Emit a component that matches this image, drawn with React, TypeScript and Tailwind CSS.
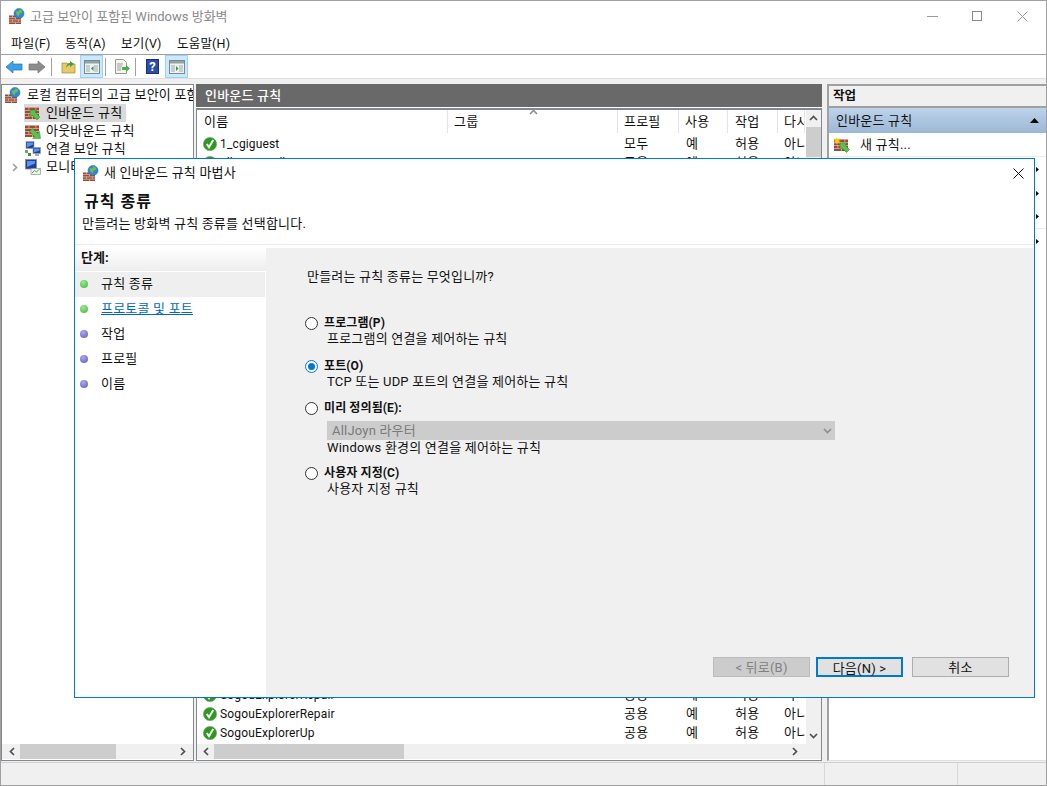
const ko = 'text-[13px] tracking-[0.2px]';

function Bricks({ x = 0, y = 0, w = 12, h = 10 }: { x?: number; y?: number; w?: number; h?: number }) {
  const rowH = h / 4;
  return (
    <g>
      <rect x={x} y={y} width={w} height={h} fill="#9c4a38" />
      {[0, 1, 2, 3].map((r) => (
        <rect key={r} x={x} y={y + r * rowH} width={w} height={0.8} fill="#d8b8a4" />
      ))}
      {[0, 1, 2, 3].map((r) => (
        <g key={r}>
          <rect x={x + (r % 2 ? w / 2 : w / 4)} y={y + r * rowH} width={0.8} height={rowH} fill="#d8b8a4" />
          {r % 2 === 0 && <rect x={x + (3 * w) / 4} y={y + r * rowH} width={0.8} height={rowH} fill="#d8b8a4" />}
        </g>
      ))}
    </g>
  );
}

function FirewallIcon() {
  return (
    <svg width="16" height="16" viewBox="0 0 16 16" className="shrink-0">
      <Bricks x={0} y={7} w={12} h={9} />
      <circle cx="10" cy="5.500" r="5" fill="#2f86d8" stroke="#1f5fa8" strokeWidth=".5" />
      <path d="M6.500 3c2 1 3 .5 4-1.800l3 1.500-1 2.300-2 .5-.8 3-2.200-2z" fill="#6cbf4a" />
    </svg>
  );
}

function RuleIcon({ dir }: { dir: 'in' | 'out' | 'new' }) {
  return (
    <svg width="16" height="16" viewBox="0 0 16 16" className="shrink-0">
      <Bricks x={0} y={2} w={14} h={12} />
      {dir === 'in' && <path d="M5 5h7l-2 2 5 5-3 3-5-5-2 2z" fill="#5cc04a" stroke="#2c8a34" strokeWidth=".5" />}
      {dir === 'out' && <path d="M15.500 15.500h-8l2-2-5-5 3-3 5 5 2-2z" fill="#5cc04a" stroke="#2c8a34" strokeWidth=".5" />}
      {dir === 'new' && <path d="M6 6h7l-2 2 4.500 4.500-3 3L8 11l-2 2z" fill="#5cc04a" stroke="#2c8a34" strokeWidth=".5" />}
      {dir === 'new' && <path d="M3 0l.8 2 2-.8-1 2 2 .8-2 .8 1 2-2-.8L3 8l-.8-2-2 .8 1-2-2-.8 2-.8-1-2 2 .8z" fill="#f5c518" />}
    </svg>
  );
}

function MonitorIcon({ variant }: { variant: 'sec' | 'mon' }) {
  if (variant === 'sec') {
    return (
      <svg width="16" height="16" viewBox="0 0 16 16" className="shrink-0">
        <rect x="1" y="0.500" width="8" height="7" fill="#1d3f9e" stroke="#99a" strokeWidth=".6" />
        <path d="M2 1.500h6v2l-6 3z" fill="#5f93e6" />
        <rect x="8" y="6.500" width="7.500" height="6" fill="#1d3f9e" stroke="#99a" strokeWidth=".6" />
        <path d="M9 7.500h5.500v2l-5.500 2z" fill="#5f93e6" />
        <rect x="10" y="13" width="4" height="2" fill="#aab" />
        <rect x="0" y="9" width="3" height="3" fill="#5cb54a" />
        <rect x="3" y="12" width="3" height="3" fill="#3f8f3f" />
      </svg>
    );
  }
  return (
    <svg width="16" height="16" viewBox="0 0 16 16" className="shrink-0">
      <rect x="0.500" y="0.500" width="11" height="9.500" fill="#1d3f9e" stroke="#889" strokeWidth=".8" />
      <path d="M2 2h8v2.500L2 8z" fill="#5f93e6" />
      <rect x="6" y="9.500" width="9.500" height="6" fill="#eef4ee" stroke="#8a9a8a" strokeWidth=".7" />
      <path d="M7 14l2.500-2.500 2 1.500 3-3" fill="none" stroke="#4cae4c" strokeWidth="1" />
    </svg>
  );
}

function CheckIcon() {
  return (
    <svg width="14" height="14" viewBox="0 0 14 14" className="shrink-0">
      <circle cx="7" cy="7" r="6.600" fill="#2c9a1c" stroke="#7f9a7f" strokeWidth=".7" />
      <path d="M3.800 7l2.200 3.200L10.200 3" fill="none" stroke="#fff" strokeWidth="2" />
    </svg>
  );
}

function Chevron({ dir, color = '#505050' }: { dir: 'l' | 'r' | 'u' | 'd'; color?: string }) {
  const d = { l: 'M6 1L2.500 4.500 6 8', r: 'M3 1l3.500 3.500L3 8', u: 'M1 6l3.500-3.500L8 6', d: 'M1 3l3.500 3.500L8 3' }[dir];
  return (
    <svg width="9" height="9" viewBox="0 0 9 9" className="shrink-0">
      <path d={d} fill="none" stroke={color} strokeWidth="1.700" />
    </svg>
  );
}

function ToolBtn({ active, children }: { active?: boolean; children: React.ReactNode }) {
  return (
    <div className={`w-[23px] h-[23px] flex items-center justify-center border ${active ? 'bg-[#cce8ff] border-[#99d1ff]' : 'border-transparent'}`}>
      {children}
    </div>
  );
}

function PaneIcon({ right }: { right?: boolean }) {
  return (
    <svg width="16" height="14" viewBox="0 0 16 14">
      <rect x=".5" y=".5" width="15" height="13" fill="#eef2f2" stroke="#7a8a8a" />
      <rect x="1" y="1" width="14" height="2.500" fill="#8fa4a4" />
      <rect x="2" y="5" width="4" height="7" fill="#c4d0d0" />
      <rect x="10" y="5" width="4" height="7" fill="#c4d0d0" />
      <path d={right ? 'M7 6v5l2.500-2.500z' : 'M9.500 6v5L7 8.500z'} fill="#2f9a3f" />
    </svg>
  );
}

function Radio({ checked }: { checked?: boolean }) {
  return (
    <span className={`w-[13px] h-[13px] rounded-full border bg-white flex items-center justify-center shrink-0 ${checked ? 'border-[#0078d7]' : 'border-[#333]'}`}>
      {checked && <span className="w-[7px] h-[7px] rounded-full bg-[#0078d7]" />}
    </span>
  );
}

function Bullet({ on }: { on: boolean }) {
  return (
    <span className={`w-[8px] h-[8px] rounded-full shrink-0 ${on ? 'bg-[radial-gradient(circle_at_40%_30%,#9be88f,#3fb83a)]' : 'bg-[radial-gradient(circle_at_40%_30%,#a9a9ee,#5a5ac0)]'}`} />
  );
}

function Option({ label, desc, checked, mt, children }: { label: string; desc: string; checked?: boolean; mt: string; children?: React.ReactNode }) {
  return (
    <div className={mt}>
      <div className="flex items-center h-[15px]">
        <Radio checked={checked} />
        <span className="ml-[6px] text-[12px] font-bold tracking-[0.1px] leading-[15px]">{label}</span>
      </div>
      {children}
      <div className={`ml-[22px] h-[16px] leading-[16px] ${ko}`}>{desc}</div>
    </div>
  );
}

const steps = [
  { t: '규칙 종류', on: true, sel: true },
  { t: '프로토콜 및 포트', on: true, link: true },
  { t: '작업', on: false },
  { t: '프로필', on: false },
  { t: '이름', on: false },
];

const rowNames = [
  '1_cgiguest', 'allinone_gdbserver', 'SogouExplorer', 'SogouExplorer', 'SogouExplorer', 'SogouExplorer', 'SogouExplorer', 'SogouExplorer',
  'SogouExplorer', 'SogouExplorer', 'SogouExplorer', 'SogouExplorer', 'SogouExplorer', 'SogouExplorer', 'SogouExplorer', 'SogouExplorer',
  'SogouExplorer', 'SogouExplorer', 'SogouExplorer', 'SogouExplorer', 'SogouExplorer', 'SogouExplorer', 'SogouExplorer', 'SogouExplorer',
  'SogouExplorer', 'SogouExplorer', 'SogouExplorer', 'SogouExplorer', 'SogouExplorer', 'SogouExplorerRepair', 'SogouExplorerRepair', 'SogouExplorerUp',
];

const cols = [
  { t: '이름', w: 'w-[251px]', p: 'pl-[7px]' },
  { t: '그룹', w: 'w-[170px]', p: 'pl-[6px]' },
  { t: '프로필', w: 'w-[61px]', p: 'pl-[6px]' },
  { t: '사용', w: 'w-[49px]', p: 'pl-[6px]' },
  { t: '작업', w: 'w-[50px]', p: 'pl-[7px]' },
  { t: '다시', w: 'w-[27px]', p: 'pl-[6px]' },
];

export default function App() {
  return (
    <div className="relative w-[1047px] h-[786px] overflow-hidden bg-[#f0f0f0] text-[#111] border border-[#a0a0a0] font-['Roboto','Noto_Sans_CJK_KR',sans-serif] text-[12px]">
      {/* title bar */}
      <div className="h-[30px] bg-white flex items-center pl-[8px]">
        <FirewallIcon />
        <span className="ml-[5px] pt-[1px] text-[#8a8a8a] text-[13px]">고급 보안이 포함된 Windows 방화벽</span>
        <div className="ml-auto flex items-center pr-[18px]">
          <div className="w-[11px] h-px bg-[#999]" />
          <div className="ml-[34px] w-[10px] h-[10px] border border-[#888]" />
          <svg width="11" height="11" viewBox="0 0 11 11" className="ml-[35px]"><path d="M.5.5l10 10M10.500.5l-10 10" stroke="#999" /></svg>
        </div>
      </div>
      {/* menu */}
      <div className="h-[24px] bg-white border-b border-[#a0a0a0] flex items-center pl-[10px] pt-[3px] text-[12.5px] tracking-[0.2px]">
        <span className="w-[54px]">파일(F)</span>
        <span className="w-[56px]">동작(A)</span>
        <span className="w-[56px]">보기(V)</span>
        <span>도움말(H)</span>
      </div>
      {/* toolbar */}
      <div className="h-[24px] bg-white flex items-center pl-[3px] border-b border-[#e0e0e0]">
        <svg width="18" height="14" viewBox="0 0 18 14" className="ml-px"><path d="M8 1v3h9v6H8v3L1 7z" fill="#3ba0e8" stroke="#2a6ea8" strokeWidth=".7" /></svg>
        <svg width="18" height="14" viewBox="0 0 18 14" className="ml-[5px]"><path d="M10 1v3H1v6h9v3l7-6z" fill="#8c8c8c" stroke="#707070" strokeWidth=".7" /></svg>
        <div className="w-px h-[18px] bg-[#a0a0a0] ml-[5px]" />
        <div className="ml-[5px]"><ToolBtn>
          <svg width="16" height="15" viewBox="0 0 16 15"><path d="M1 4h5l1 1h7v9H1z" fill="#e8c868" stroke="#a88830" strokeWidth=".7" /><path d="M5 9c0-3 2-5 4-5V2l4 3-4 3V6c-1.500 0-3 1-4 3z" fill="#3f9f3f" /></svg>
        </ToolBtn></div>
        <ToolBtn active><PaneIcon /></ToolBtn>
        <div className="w-px h-[18px] bg-[#a0a0a0] ml-[2px]" />
        <div className="ml-[4px]"><ToolBtn>
          <svg width="16" height="16" viewBox="0 0 16 16"><path d="M1.500.5h8l3 3v11h-11z" fill="#f6f6ee" stroke="#999" /><path d="M3 5h6M3 7h5M3 9h4M3 11h4" stroke="#999" /><path d="M8 8h4V6l4 3.500-4 3.500v-2H8z" fill="#4caf50" /></svg>
        </ToolBtn></div>
        <div className="w-px h-[18px] bg-[#a0a0a0] ml-[2px]" />
        <div className="ml-[5px]"><ToolBtn>
          <div className="w-[13px] h-[15px] bg-[#2b4fa8] border border-[#1a2f70] text-white font-bold text-[13px] leading-[13px] text-center">?</div>
        </ToolBtn></div>
        <div className="ml-px"><ToolBtn active><PaneIcon right /></ToolBtn></div>
      </div>
      {/* panes */}
      <div className="flex h-[682px] pt-[5px]">
        <div className="w-[193px] h-full border border-[#828790] bg-white relative flex flex-col shrink-0 overflow-hidden">
          <div className="flex-1 pl-[3px] pt-[1px]">
            <div className="flex items-center h-[18px]">
              <FirewallIcon />
              <span className={`ml-[6px] whitespace-nowrap ${ko}`}>로컬 컴퓨터의 고급 보안이 포함된 Windows 방화벽</span>
            </div>
            <div className="flex items-center h-[18px] ml-[19px]">
              <div className="flex items-center bg-[#d9d9d9] pl-px pr-[4px] h-[18px]">
                <RuleIcon dir="in" />
                <span className={`ml-[5px] whitespace-nowrap ${ko}`}>인바운드 규칙</span>
              </div>
            </div>
            <div className="flex items-center h-[18px] ml-[20px]">
              <RuleIcon dir="out" />
              <span className={`ml-[5px] whitespace-nowrap ${ko}`}>아웃바운드 규칙</span>
            </div>
            <div className="flex items-center h-[18px] ml-[20px]">
              <MonitorIcon variant="sec" />
              <span className={`ml-[5px] whitespace-nowrap ${ko}`}>연결 보안 규칙</span>
            </div>
            <div className="flex items-center h-[18px] ml-[5px]">
              <Chevron dir="r" color="#a0a0a0" />
              <span className="ml-[6px]"><MonitorIcon variant="mon" /></span>
              <span className={`ml-[5px] whitespace-nowrap ${ko}`}>모니터링</span>
            </div>
          </div>
          <div className="h-[15px] bg-[#f0f0f0] flex items-center px-[6px] shrink-0 mb-[1px]">
            <Chevron dir="l" />
            <div className="ml-[3px] w-[96px] h-[15px] bg-[#cdcdcd]" />
            <div className="ml-auto"><Chevron dir="r" /></div>
          </div>
        </div>
        <div className="w-[2px] shrink-0" />
        <div className="w-[626px] h-full flex flex-col shrink-0">
          <div className="h-[23px] bg-[#696969] text-white flex items-center pl-[9px] text-[13px] tracking-[0.2px] font-medium shrink-0">인바운드 규칙</div>
          <div className="h-[1px] bg-white shrink-0" />
          <div className="flex-1 min-h-0 border border-t-2 border-[#828790] bg-white flex flex-col relative overflow-hidden">
            <div className="flex-1 min-h-0 flex overflow-hidden">
              <div className="flex-1 min-w-0 overflow-hidden">
                <div className="flex h-[23px] items-center relative">
                  {cols.map((c) => (
                    <div key={c.t} className={`${c.w} ${c.p} shrink-0 h-[23px] leading-[23px] whitespace-nowrap overflow-hidden border-r border-[#e5e5e5] last:border-r-0 ${ko}`}>{c.t}</div>
                  ))}
                  <div className="absolute left-[332px] top-[-2px]"><Chevron dir="u" color="#909090" /></div>
                </div>
                <div className="pt-[1px]">
                  {rowNames.map((n, i) => (
                    <div key={i} className="flex h-[19px] items-center">
                      <div className="w-[251px] shrink-0 flex items-center pl-[6px]">
                        <CheckIcon />
                        <span className="ml-[3px] text-[12px] tracking-[0.15px]">{n}</span>
                      </div>
                      <div className="w-[170px] shrink-0" />
                      <div className={`w-[61px] shrink-0 pl-[6px] ${ko}`}>{i === 0 ? '모두' : '공용'}</div>
                      <div className={`w-[49px] shrink-0 pl-[7px] ${ko}`}>예</div>
                      <div className={`w-[50px] shrink-0 pl-[7px] ${ko}`}>허용</div>
                      <div className={`w-[27px] shrink-0 pl-[6px] whitespace-nowrap overflow-hidden ${ko}`}>아니요</div>
                    </div>
                  ))}
                </div>
              </div>
              <div className="w-[15px] bg-[#f0f0f0] flex flex-col items-center shrink-0">
                <div className="h-[17px] flex items-center"><Chevron dir="u" /></div>
                <div className="w-[15px] h-[30px] bg-[#cdcdcd]" />
                <div className="mt-auto h-[17px] flex items-center"><Chevron dir="d" /></div>
              </div>
            </div>
            <div className="h-[15px] bg-[#f0f0f0] flex items-center pl-[5px] shrink-0 mb-[1px]">
              <Chevron dir="l" />
              <div className="ml-[3px] w-[190px] h-[15px] bg-[#cdcdcd]" />
              <div className="ml-[386px]"><Chevron dir="r" /></div>
            </div>
          </div>
        </div>
        <div className="w-[5px] shrink-0" />
        <div className="flex-1 h-full border-2 border-[#a0a0a0] border-r-0 border-b border-b-[#e0e0e0] bg-white flex flex-col min-w-0">
          <div className="h-[22px] bg-[#f0f0f0] border-b-2 border-[#a0a0a0] flex items-center pl-[4px] text-[12.5px] font-bold shrink-0">작업</div>
          <div className="h-[25px] bg-gradient-to-b from-[#bcd3ea] to-[#9db8d6] flex items-center pl-[7px] pr-[7px] shrink-0">
            <span className={ko}>인바운드 규칙</span>
            <svg width="9" height="5" viewBox="0 0 9 5" className="ml-auto"><path d="M4.500 0L9 5H0z" fill="#000" /></svg>
          </div>
          <div className="h-[24px] flex items-center pl-[5px] border-b border-[#ececec] shrink-0">
            <RuleIcon dir="new" />
            <span className={`ml-[10px] ${ko}`}>새 규칙...</span>
          </div>
          {[0, 1, 2, 3].map((i) => (
            <div key={i} className={`h-[24px] flex items-center justify-end pr-[7px] shrink-0 ${i === 2 ? 'border-b border-[#ececec]' : ''}`}>
              <svg width="3" height="5" viewBox="0 0 3 5"><path d="M0 0l3 2.500L0 5z" fill="#000" /></svg>
            </div>
          ))}
        </div>
      </div>
      {/* status bar */}
      <div className="h-[23px] mt-[1px] border-t border-[#d0d0d0] flex">
        <div className="w-[824px] border-r border-[#d8d8d8]" />
        <div className="w-[133px] border-r border-[#d8d8d8]" />
        <div className="flex-1" />
      </div>

      {/* wizard dialog */}
      <div className="absolute left-[73px] top-[157px] w-[961px] h-[540px] bg-white border border-[#0078d7] flex flex-col">
        <div className="h-[28px] flex items-center pl-[8px] pr-[10px] shrink-0">
          <FirewallIcon />
          <span className={`ml-[5px] ${ko}`}>새 인바운드 규칙 마법사</span>
          <svg width="11" height="11" viewBox="0 0 11 11" className="ml-auto"><path d="M.5.5l10 10M10.500.5l-10 10" stroke="#111" /></svg>
        </div>
        <div className="h-[58px] shrink-0 pl-[7px] pt-[5px] border-b border-[#ececec]">
          <div className="text-[16px] font-bold tracking-[1px] leading-[20px] pl-[2px]">규칙 종류</div>
          <div className={`mt-[3px] leading-[18px] ${ko}`}>만들려는 방화벽 규칙 종류를 선택합니다.</div>
        </div>
        <div className="flex-1 min-h-0 flex pt-[3px]">
          <div className="w-[194px] border-r-[3px] border-[#f0f0f0] shrink-0 flex flex-col">
            <div className="h-[23px] bg-gradient-to-b from-white to-[#ededed] pl-[6px] leading-[20px] text-[13px] font-bold shrink-0">단계:</div>
            <div className="pt-[1px] pr-[1px]">
              {steps.map((s) => (
                <div key={s.t} className={`h-[25px] flex items-center pl-[5px] pb-[2px] ${s.sel ? 'bg-[#efefef]' : ''}`}>
                  <Bullet on={s.on} />
                  <span className={`ml-[13px] ${ko} ${s.link ? 'text-[#0066cc] underline' : ''}`}>{s.t}</span>
                </div>
              ))}
            </div>
          </div>
          <div className="flex-1 min-w-0 bg-[#f0f0f0] flex flex-col pl-[36px] pt-[20px] pr-[25px] pb-[20px]">
            <div className={`pl-[2px] leading-[18px] ${ko}`}>만들려는 규칙 종류는 무엇입니까?</div>
            <div className="pl-0 pr-[174px]">
              <Option mt="mt-[30px]" label="프로그램(P)" desc="프로그램의 연결을 제어하는 규칙" />
              <Option mt="mt-[12px]" checked label="포트(O)" desc="TCP 또는 UDP 포트의 연결을 제어하는 규칙" />
              <Option mt="mt-[11px]" label="미리 정의됨(E):" desc="Windows 환경의 연결을 제어하는 규칙">
                <div className={`ml-[22px] mt-[5px] h-[19px] bg-[#cccccc] flex items-center pl-[5px] pr-[3px] text-[#7a7a7a] ${ko}`}>
                  AllJoyn 라우터
                  <span className="ml-auto"><Chevron dir="d" color="#909090" /></span>
                </div>
              </Option>
              <Option mt="mt-[10px]" label="사용자 지정(C)" desc="사용자 지정 규칙" />
            </div>
            <div className="mt-auto flex justify-end">
              <button className={`w-[97px] h-[20px] bg-[#cccccc] border border-[#bbb] text-[#808080] ${ko}`}>&lt; 뒤로(B)</button>
              <button className={`ml-[6px] w-[87px] h-[20px] bg-[#e1e1e1] border-2 border-[#0078d7] ${ko}`}>다음(N) &gt;</button>
              <button className={`ml-[9px] w-[97px] h-[20px] bg-[#e1e1e1] border border-[#adadad] ${ko}`}>취소</button>
            </div>
          </div>
        </div>
      </div>
    </div>
  );
}
